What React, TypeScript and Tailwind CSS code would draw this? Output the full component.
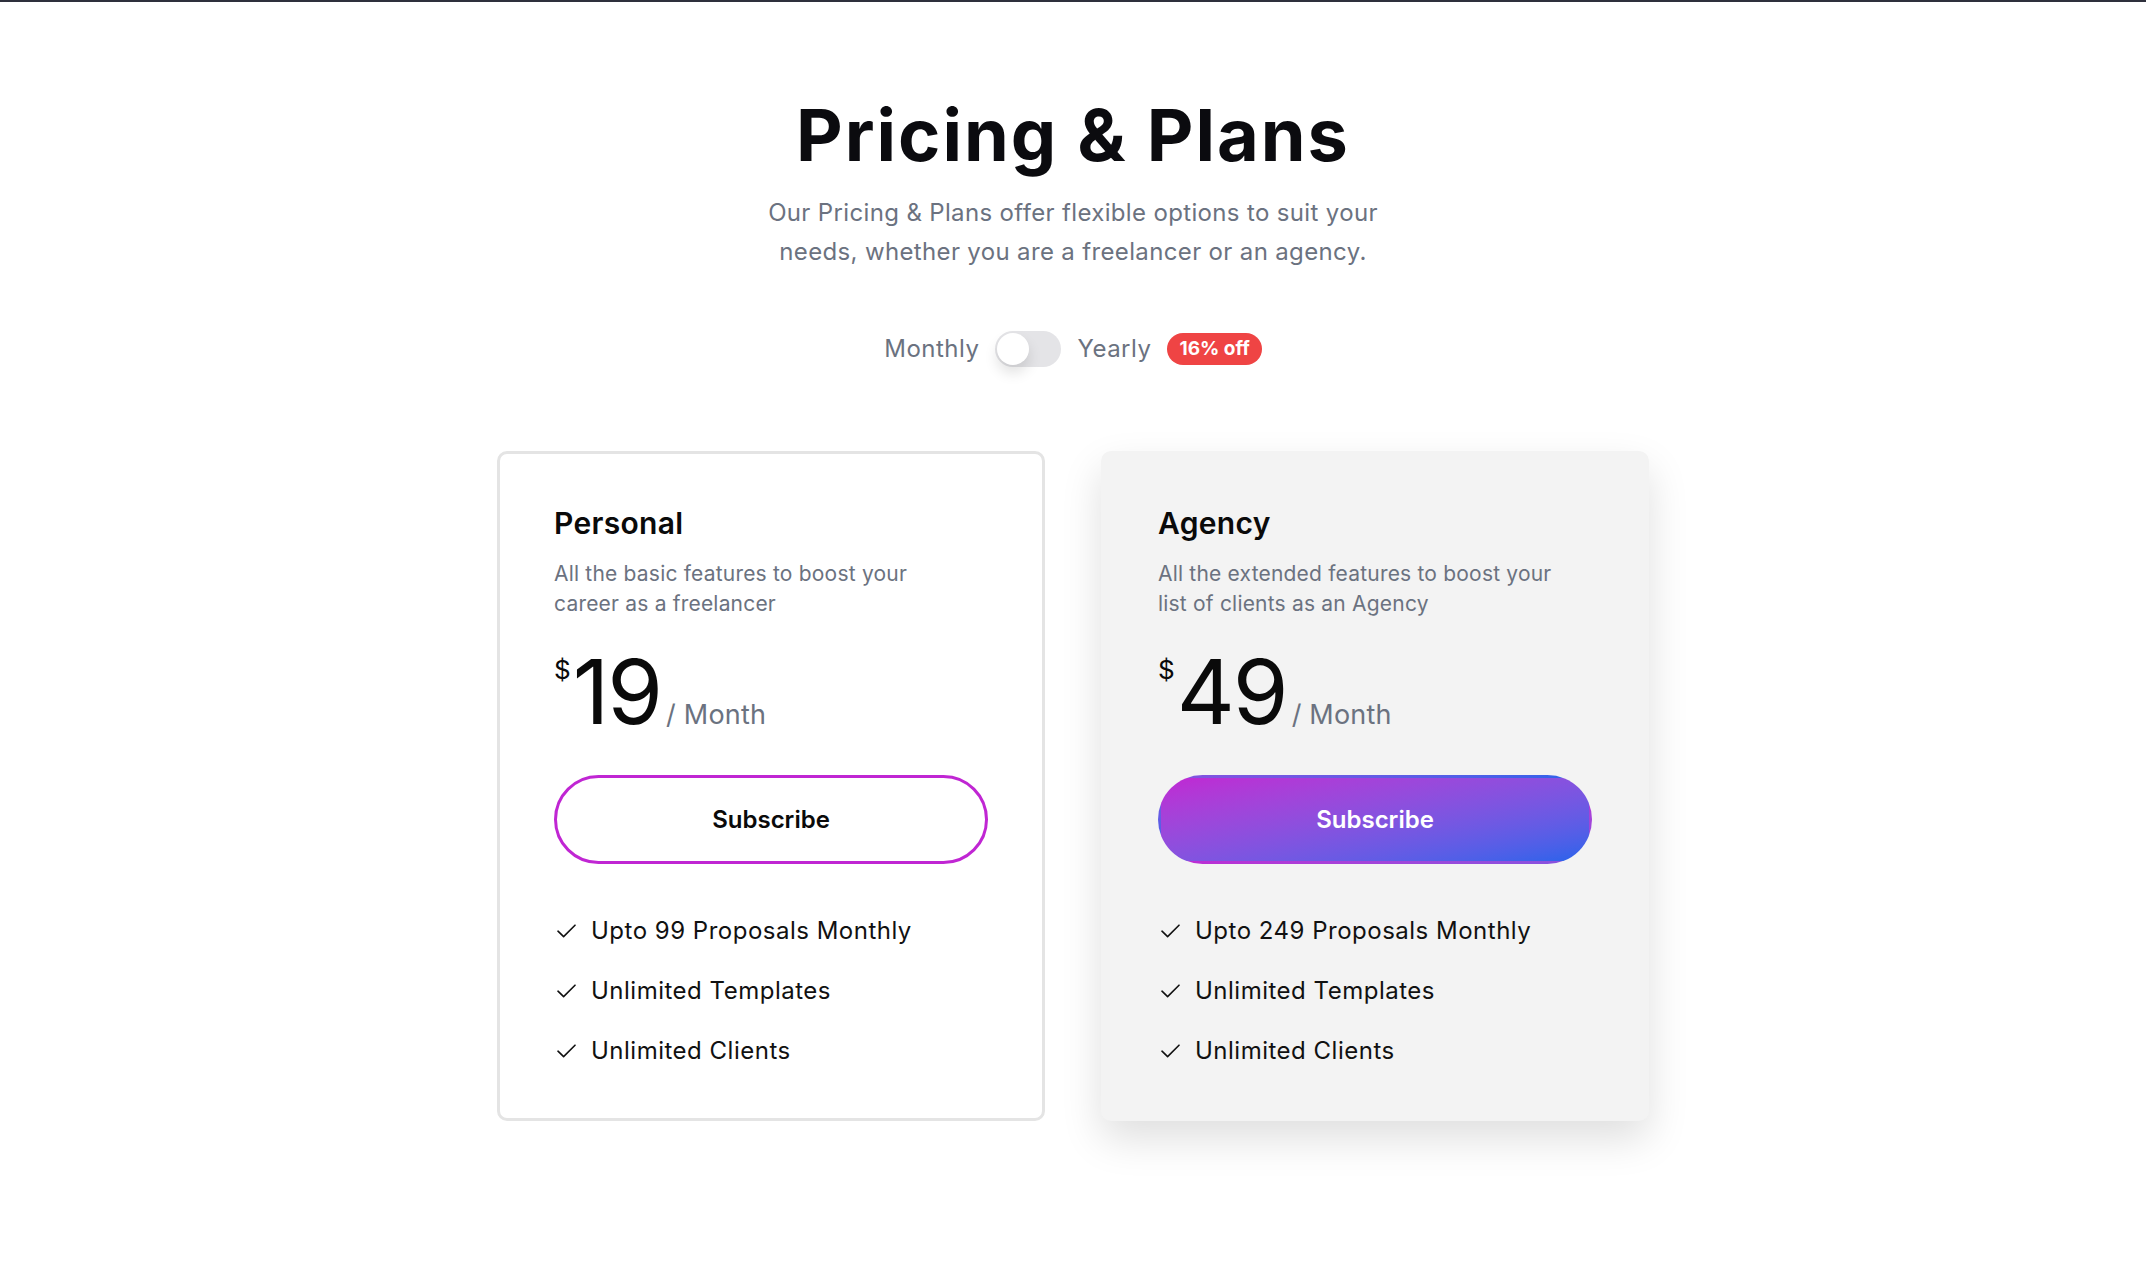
import React, { useState } from 'react';

type Plan = {
  name: string;
  blurb: string;
  price: number;
  features: string[];
  featured?: boolean;
};

const plans: Plan[] = [
  {
    name: 'Personal',
    blurb: 'All the basic features to boost your career as a freelancer',
    price: 19,
    features: ['Upto 99 Proposals Monthly', 'Unlimited Templates', 'Unlimited Clients'],
  },
  {
    name: 'Agency',
    blurb: 'All the extended features to boost your list of clients as an Agency',
    price: 49,
    features: ['Upto 249 Proposals Monthly', 'Unlimited Templates', 'Unlimited Clients'],
    featured: true,
  },
];

const CheckMark = () => (
  <svg width="19" height="14" viewBox="0 0 19 14" fill="none" className="ml-[3px] shrink-0">
    <polyline points="1,7.2 6.6,12.6 18,1.2" stroke="#111111" strokeWidth="1.6" strokeLinecap="round" strokeLinejoin="round" />
  </svg>
);

const PlanCard: React.FC<{ plan: Plan }> = ({ plan }) => (
  <div
    className={
      plan.featured
        ? 'rounded-[10px] border-[3px] border-transparent bg-[#f3f3f3] px-[54px] pt-[54px] pb-[49px] shadow-[0_18px_40px_rgba(0,0,0,0.13)]'
        : 'rounded-[10px] border-[3px] border-[#e4e4e4] bg-white px-[54px] pt-[54px] pb-[49px]'
    }
  >
    <h2 className="text-[30px] leading-[30px] font-semibold tracking-[0.3px] text-[#0a0a0a]">{plan.name}</h2>
    <p className="mt-[21px] pr-8 text-[21px] leading-[30px] tracking-[0.2px] text-[#6b7280]">{plan.blurb}</p>

    <div className="mt-[28px] flex items-start">
      <span className="mt-[10px] text-[26px] leading-none text-[#0a0a0a]">$</span>
      <div className="ml-[2px] flex items-baseline">
        <span className="text-[90px] leading-[90px] font-normal tracking-[-2px] text-[#0a0a0a]">{plan.price}</span>
        <span className="ml-[5px] text-[27px] tracking-[0.2px] text-[#6b7280]">/ Month</span>
      </div>
    </div>

    <button
      className={
        plan.featured
          ? 'mt-[38px] h-[89px] w-full rounded-full border-[3px] border-transparent bg-linear-to-br from-[#c026d3] to-[#2563eb] text-2xl font-semibold text-white'
          : 'mt-[38px] h-[89px] w-full rounded-full border-[3px] border-[#c026d3] bg-white text-2xl font-semibold text-[#0a0a0a]'
      }
    >
      Subscribe
    </button>

    <ul className="mt-[49px] flex flex-col gap-6">
      {plan.features.map(f => (
        <li key={f} className="flex items-center gap-[15px] text-2xl leading-9 tracking-[0.5px] text-[#111111]">
          <CheckMark />
          {f}
        </li>
      ))}
    </ul>
  </div>
);

export default function App() {
  const [yearly, setYearly] = useState(false);

  return (
    <div className="min-h-screen border-t-2 border-[#2e303c] bg-white font-[family-name:Inter,sans-serif]">
      <section className="flex flex-col items-center pt-[97px] pb-24">
        <h1 className="text-[72px] leading-[72px] font-bold tracking-[2px] text-[#0b0b0f]">Pricing &amp; Plans</h1>
        <p className="mt-[22px] max-w-[660px] text-center text-2xl leading-[39px] tracking-[0.35px] text-[#6b7280]">
          Our Pricing &amp; Plans offer flexible options to suit your needs, whether you are a freelancer or an agency.
        </p>

        <div className="mt-[60px] flex items-center gap-4">
          <span className="text-2xl tracking-[0.5px] text-[#6b7280]">Monthly</span>
          <button
            onClick={() => setYearly(!yearly)}
            aria-label="Toggle billing period"
            className={`flex h-9 w-[66px] items-center rounded-full bg-[#e4e4e7] px-[2px] ${yearly ? 'justify-end' : 'justify-start'}`}
          >
            <span className="h-8 w-8 rounded-full bg-white shadow-[0_8px_14px_rgba(0,0,0,0.12)]" />
          </button>
          <span className="text-2xl tracking-[0.5px] text-[#6b7280]">Yearly</span>
          <span className="flex h-8 items-center rounded-full bg-[#ef4444] px-3 text-[19px] font-bold text-white">16% off</span>
        </div>

        <div className="mt-[84px] grid w-full max-w-6xl grid-cols-2 gap-14">
          {plans.map(p => (
            <PlanCard key={p.name} plan={p} />
          ))}
        </div>
      </section>
    </div>
  );
}
